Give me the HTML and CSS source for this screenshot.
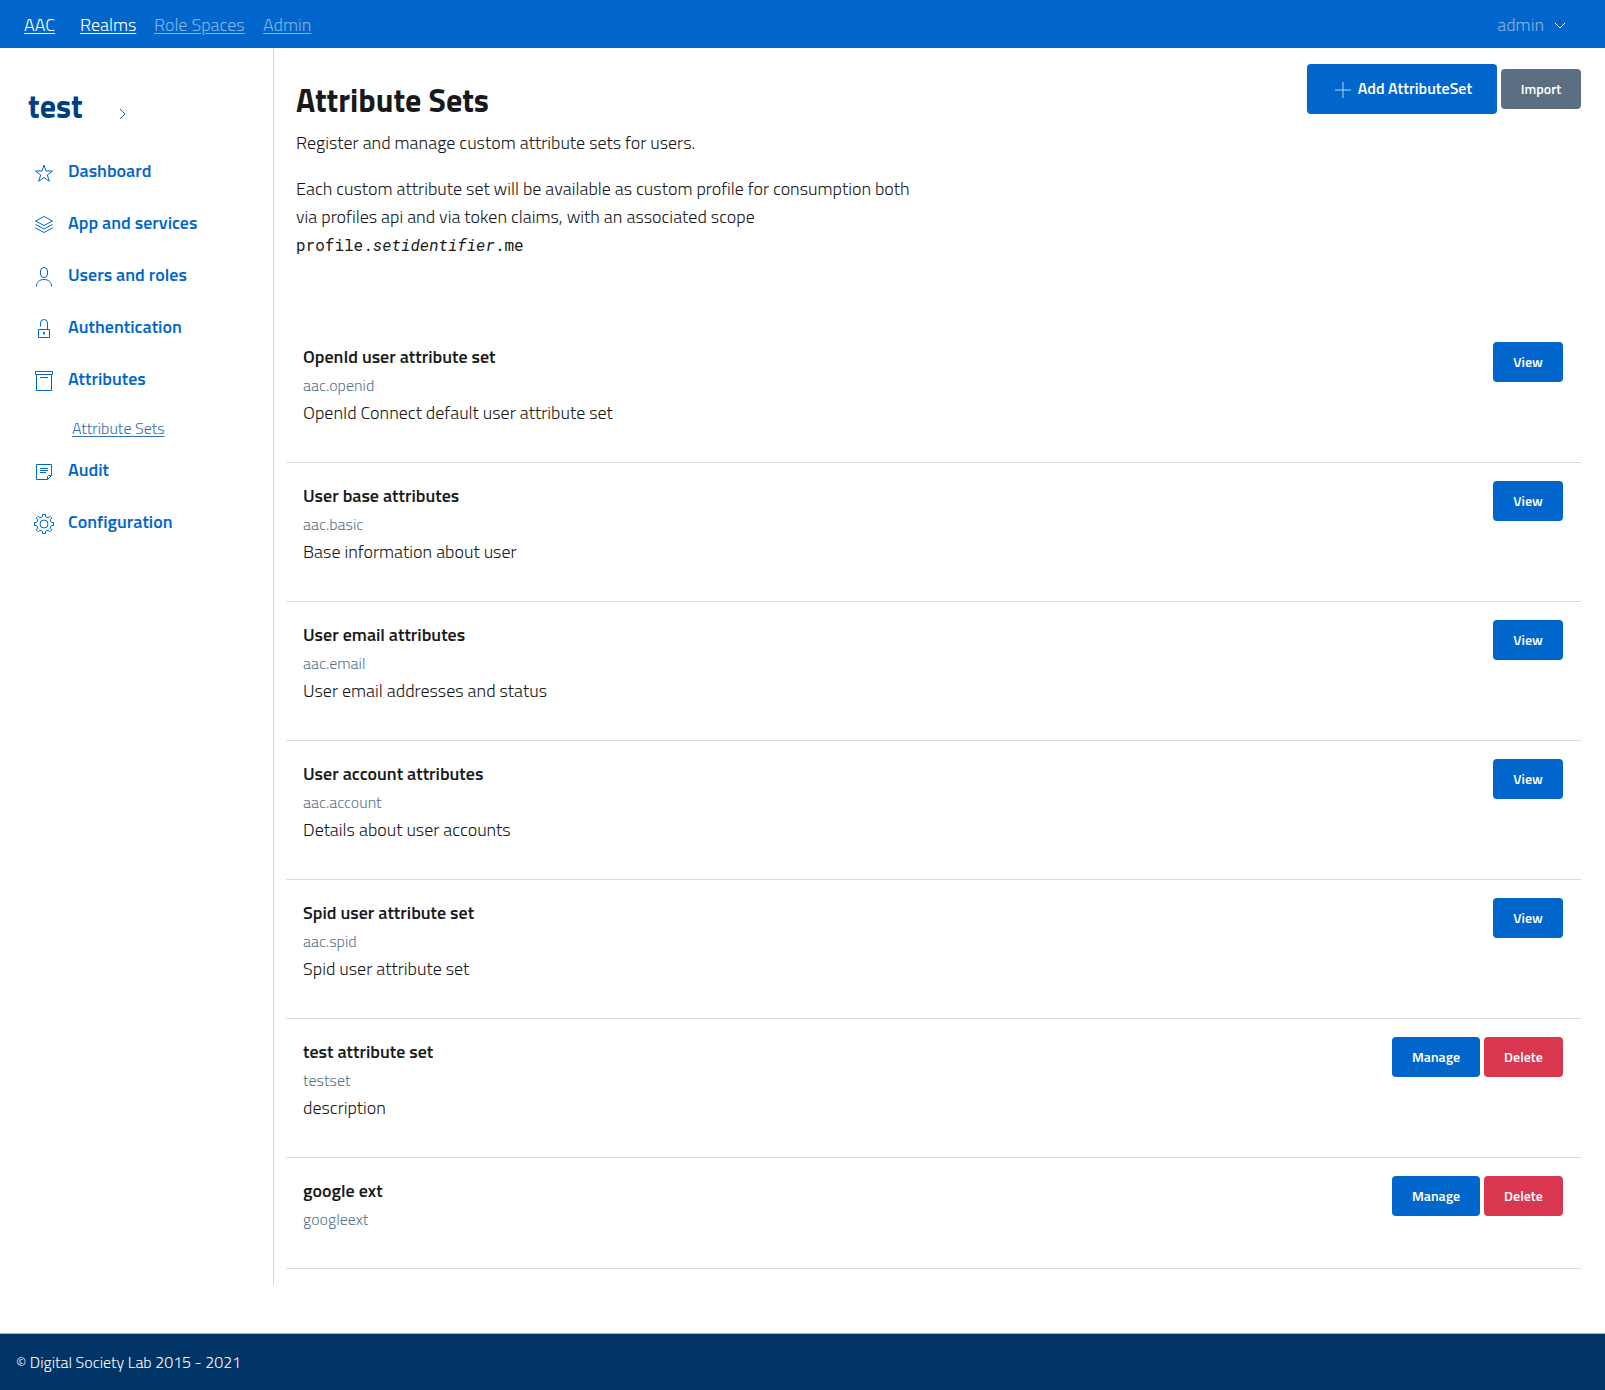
FILE: index.html
```html
<!DOCTYPE html>
<html lang="en">
<head>
<meta charset="utf-8">
<title>Attribute Sets</title>
<link rel="stylesheet" href="styles.css">
</head>
<body>
<header class="topbar">
  <a class="brand" href="#">AAC</a>
  <nav class="topnav">
    <a class="realms" href="#">Realms</a>
    <a class="muted spaces" href="#">Role Spaces</a>
    <a class="muted" href="#">Admin</a>
  </nav>
  <button class="account" type="button">admin
    <svg class="caret" viewBox="0 0 12 8"><path d="M1 1l5 5 5-5"/></svg>
  </button>
</header>
<div class="layout">
  <aside class="sidebar">
    <a class="realm" href="#"><span class="realm-name">test</span>
      <svg class="realm-caret" viewBox="0 0 8 12"><path d="M1 1l5 5-5 5"/></svg>
    </a>
    <ul class="menu">
      <li><a class="item" href="#"><svg class="icon" viewBox="0 0 24 24"><path d="M12 4l2 6h6.500l-5.200 4 2 6.300L12 16.500l-5.300 3.800 2-6.300-5.200-4H10z"/></svg>Dashboard</a></li>
      <li><a class="item" href="#"><svg class="icon" viewBox="0 0 24 24"><path d="M12 3.500l8.500 4.500-8.500 4.500L3.500 8zM3.500 11.500L12 16l8.500-4.500M3.500 15l8.500 4.500 8.500-4.500"/></svg>App and services</a></li>
      <li><a class="item" href="#"><svg class="icon" viewBox="0 0 24 24"><rect x="8.500" y="2.500" width="7" height="10" rx="3.500"/><path d="M4.500 21.500c0-4.500 3-7 7.500-7s7.500 2.500 7.500 7"/></svg>Users and roles</a></li>
      <li><a class="item" href="#"><svg class="icon" viewBox="0 0 24 24"><path d="M6.500 12.500h11v8h-11zM8.500 9.500V6a3.500 3.500 0 0 1 7 0v6.500"/><path class="solid" d="M11 15h2v1.500h-.5V18h-1v-1.500H11z"/></svg>Authentication</a></li>
      <li><a class="item" href="#"><svg class="icon" viewBox="0 0 24 24"><path d="M3.500 2.500h17v3h-17zM4.500 5.500v16h15v-16M8 8.500h8"/></svg>Attributes</a>
        <a class="subitem" href="#">Attribute Sets</a></li>
      <li><a class="item" href="#"><svg class="icon" viewBox="0 0 24 24"><path d="M19.500 15.500v-11h-15v15h11l4-4h-3l-1 1v3M8 8.500h8M8 10.500h8M8 12.500h6"/></svg>Audit</a></li>
      <li><a class="item" href="#"><svg class="icon" viewBox="0 0 24 24"><path d="M10.500 2.500h3v2.200l2.600 1.100 1.700-1.600 2 2-1.600 1.700 1.100 2.600h2.200v3h-2.200l-1.100 2.600 1.600 1.700-2 2-1.700-1.600-2.600 1.100v2.200h-3v-2.200l-2.600-1.100-1.700 1.600-2-2 1.600-1.700-1.100-2.600H2.500v-3h2.200l1.100-2.600-1.600-1.700 2-2 1.700 1.600 2.600-1.100z"/><circle cx="12" cy="12" r="4"/></svg>Configuration</a></li>
    </ul>
  </aside>
  <main class="content">
    <div class="page-head">
      <div class="intro">
        <h1>Attribute Sets</h1>
        <p>Register and manage custom attribute sets for users.</p>
        <p>Each custom attribute set will be available as custom profile for consumption both<br>via profiles api and via token claims, with an associated scope<br><code>profile.<em>setidentifier</em>.me</code></p>
      </div>
      <div class="actions">
        <button class="btn btn-large" type="button"><svg class="plus" viewBox="0 0 16 16"><path d="M8 0v16M0 8h16"/></svg>Add AttributeSet</button>
        <button class="btn btn-secondary" type="button">Import</button>
      </div>
    </div>
    <ul class="sets">
      <li class="set"><div class="set-text"><h2>OpenId user attribute set</h2><p class="key">aac.openid</p><p>OpenId Connect default user attribute set</p></div><div class="actions"><button class="btn btn-view" type="button">View</button></div></li>
      <li class="set"><div class="set-text"><h2>User base attributes</h2><p class="key">aac.basic</p><p>Base information about user</p></div><div class="actions"><button class="btn btn-view" type="button">View</button></div></li>
      <li class="set"><div class="set-text"><h2>User email attributes</h2><p class="key">aac.email</p><p>User email addresses and status</p></div><div class="actions"><button class="btn btn-view" type="button">View</button></div></li>
      <li class="set"><div class="set-text"><h2>User account attributes</h2><p class="key">aac.account</p><p>Details about user accounts</p></div><div class="actions"><button class="btn btn-view" type="button">View</button></div></li>
      <li class="set"><div class="set-text"><h2>Spid user attribute set</h2><p class="key">aac.spid</p><p>Spid user attribute set</p></div><div class="actions"><button class="btn btn-view" type="button">View</button></div></li>
      <li class="set"><div class="set-text"><h2>test attribute set</h2><p class="key">testset</p><p>description</p></div><div class="actions"><button class="btn btn-manage" type="button">Manage</button><button class="btn btn-danger" type="button">Delete</button></div></li>
      <li class="set"><div class="set-text"><h2>google ext</h2><p class="key">googleext</p></div><div class="actions"><button class="btn btn-manage" type="button">Manage</button><button class="btn btn-danger" type="button">Delete</button></div></li>
    </ul>
  </main>
</div>
<footer class="footer">© Digital Society Lab 2015 - 2021</footer>
</body>
</html>
```
FILE: styles.css
```css
* { box-sizing: border-box; }
body {
  margin: 0;
  font: 300 18px/28px "Titillium Web", Lato, "Open Sans", sans-serif;
  color: #19191a;
  background: #fff;
}
h1, h2, p, ul { margin: 0; padding: 0; }
ul { list-style: none; }
svg { fill: none; stroke: currentColor; flex: none; }
button { font: inherit; border: 0; cursor: pointer; }

.topbar {
  display: flex;
  align-items: center;
  height: 48px;
  padding: 2px 35px 0 24px;
  background: #06c;
  color: #fff;
}
.topbar a { color: #fff; text-underline-offset: 2px; text-decoration-thickness: 1px; }
.topbar .muted { color: #80b3e6; }
.brand { min-width: 56px; }
.topnav { display: flex; flex: 1; }
.realms { min-width: 74px; }
.spaces { min-width: 109px; }
.account {
  display: flex;
  align-items: center;
  gap: 10px;
  padding: 0 4px;
  background: none;
  color: #80b3e6;
}
.caret { width: 12px; height: 8px; margin-top: 2px; color: #fff; }

.layout { display: flex; padding-bottom: 48px; }
.sidebar {
  flex: none;
  width: 274px;
  padding: 38px 28px 0;
  border-right: 1px solid #d6d8db;
}
.realm {
  display: flex;
  align-items: center;
  height: 40px;
  color: #004080;
  font-size: 32px;
  line-height: 40px;
  font-weight: 700;
  text-decoration: none;
}
.realm-name { min-width: 91px; }
.realm-caret { width: 8px; height: 12px; margin-top: 15px; color: #06c; }
.menu { padding-top: 19px; }
.item {
  display: flex;
  align-items: center;
  gap: 12px;
  height: 52px;
  padding: 0 4px;
  color: #06c;
  font-weight: 600;
  text-decoration: none;
}
.icon { width: 24px; height: 24px; margin-top: 4px; }
.icon .solid { fill: currentColor; stroke: none; }
.subitem {
  display: block;
  height: 39px;
  padding: 9px 0 0 44px;
  color: #3370ad;
  font-size: 16px;
  text-underline-offset: 2px;
  text-decoration-thickness: 1px;
}

.content { flex: 1; min-width: 0; padding: 16px 24px 16px 12px; }
.page-head {
  display: flex;
  justify-content: space-between;
  align-items: flex-start;
  min-height: 260px;
  padding-left: 10px;
}
.intro { padding-top: 16px; }
.intro p + p { margin-top: 18px; }
h1 { margin-bottom: 9px; font-size: 32px; line-height: 40px; font-weight: 700; }
code { font: 400 16px/28px "Roboto Mono", "Liberation Mono", monospace; }

.actions { display: flex; align-items: center; gap: 4px; }
.btn {
  height: 40px;
  padding: 0;
  border-radius: 4px;
  background: #06c;
  color: #fff;
  font-size: 14px;
  line-height: 20px;
  font-weight: 600;
}
.btn-view { width: 70px; }
.btn-manage { width: 88px; }
.btn-danger { width: 79px; background: #d9364f; }
.btn-secondary { width: 80px; background: #5c6f82; }
.btn-large {
  display: flex;
  align-items: center;
  justify-content: center;
  gap: 7px;
  width: 190px;
  height: 50px;
  padding: 0 0 2px 3px;
  font-size: 16px;
}
.plus { width: 16px; height: 16px; margin-top: 3px; opacity: .7; }

.set {
  display: flex;
  justify-content: space-between;
  align-items: flex-start;
  padding: 18px 18px 35px 17px;
  border-bottom: 1px solid #d6dce3;
}
.set-text { padding-top: 1px; }
.set h2 { font-size: 18px; line-height: 28px; font-weight: 600; }
.set .key { color: #5a768a; font-size: 16px; }

.footer {
  padding: 14px 16px;
  border-top: 1px solid #a5b3c2;
  background: #036;
  color: #fff;
  font-size: 16px;
}
```
